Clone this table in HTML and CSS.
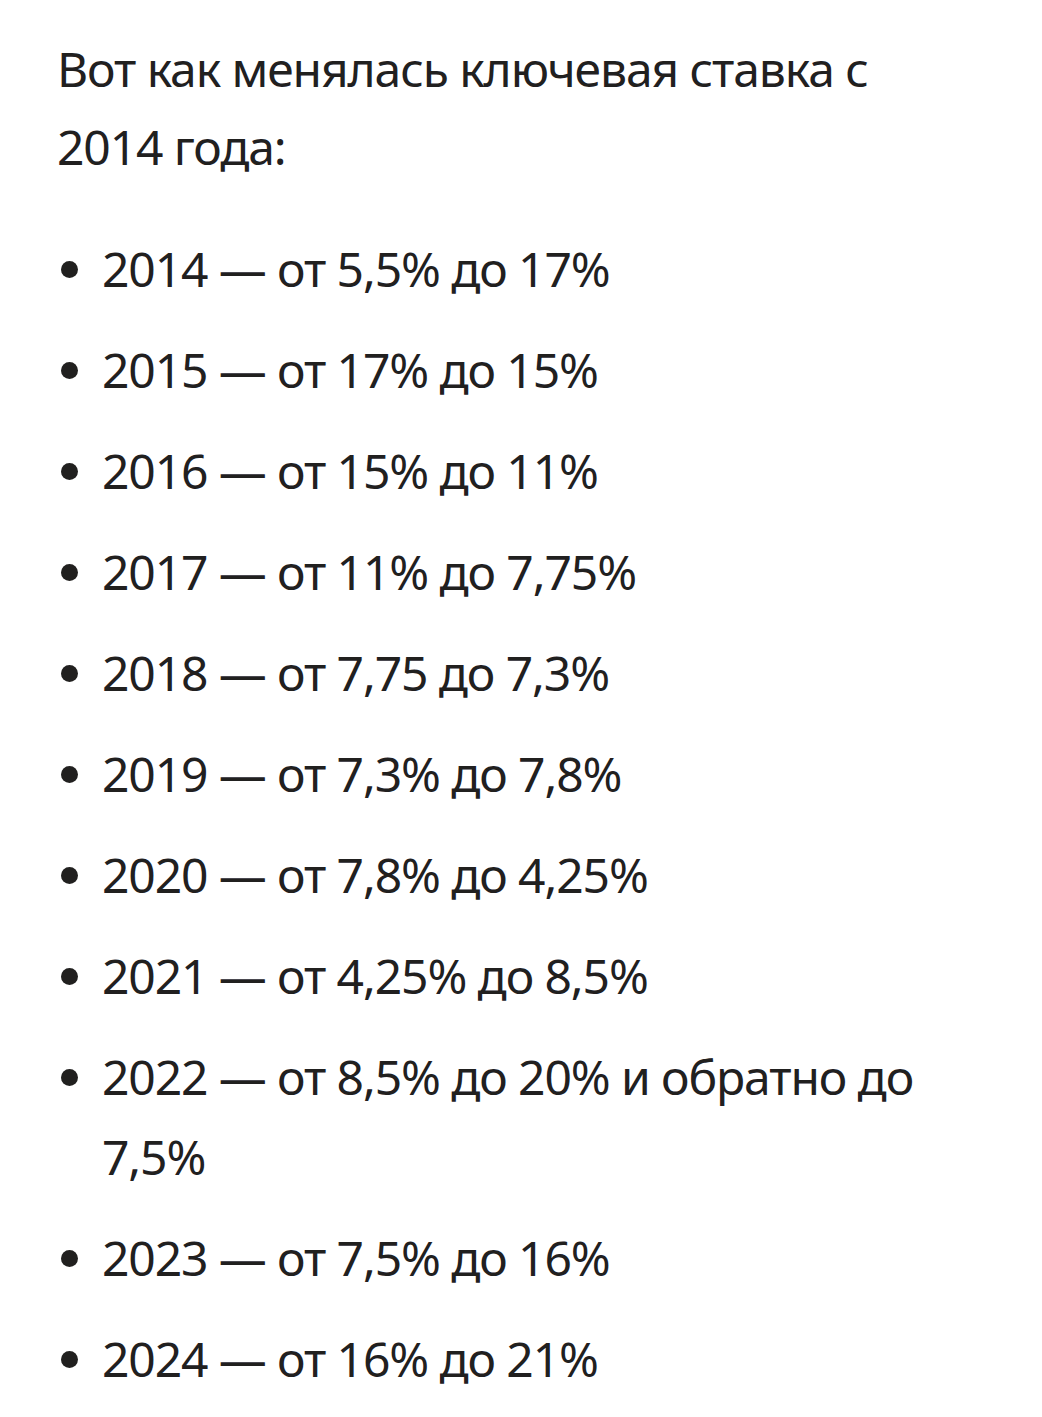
FILE: index.html
```html
<!DOCTYPE html>
<html lang="ru">
<head>
<meta charset="utf-8">
<link rel="stylesheet" href="styles.css">
</head>
<body>
<div class="article">
  <p class="lead">Вот как менялась ключевая ставка с 2014 года:</p>
  <ul class="rates">
    <li>2014 — от 5,5% до 17%</li>
    <li>2015 — от 17% до 15%</li>
    <li>2016 — от 15% до 11%</li>
    <li>2017 — от 11% до 7,75%</li>
    <li>2018 — от 7,75 до 7,3%</li>
    <li>2019 — от 7,3% до 7,8%</li>
    <li>2020 — от 7,8% до 4,25%</li>
    <li>2021 — от 4,25% до 8,5%</li>
    <li>2022 — от 8,5% до 20% и обратно до 7,5%</li>
    <li>2023 — от 7,5% до 16%</li>
    <li>2024 — от 16% до 21%</li>
  </ul>
</div>
</body>
</html>
```

FILE: styles.css
```css
html, body {
  margin: 0;
  padding: 0;
  background: #ffffff;
}
.article {
  padding: 30px 70px 0 57px;
  font-family: "Noto Sans", "Open Sans", sans-serif;
  font-size: 48px;
  letter-spacing: -1.1px;
  line-height: 80px;
  color: #21201f;
}
.lead {
  margin: 0 0 43px 0;
  line-height: 78px;
}
.rates {
  margin: 0;
  padding: 0 0 0 45px;
  list-style: disc;
}
.rates li {
  margin: 0 0 21px 0;
}
```
